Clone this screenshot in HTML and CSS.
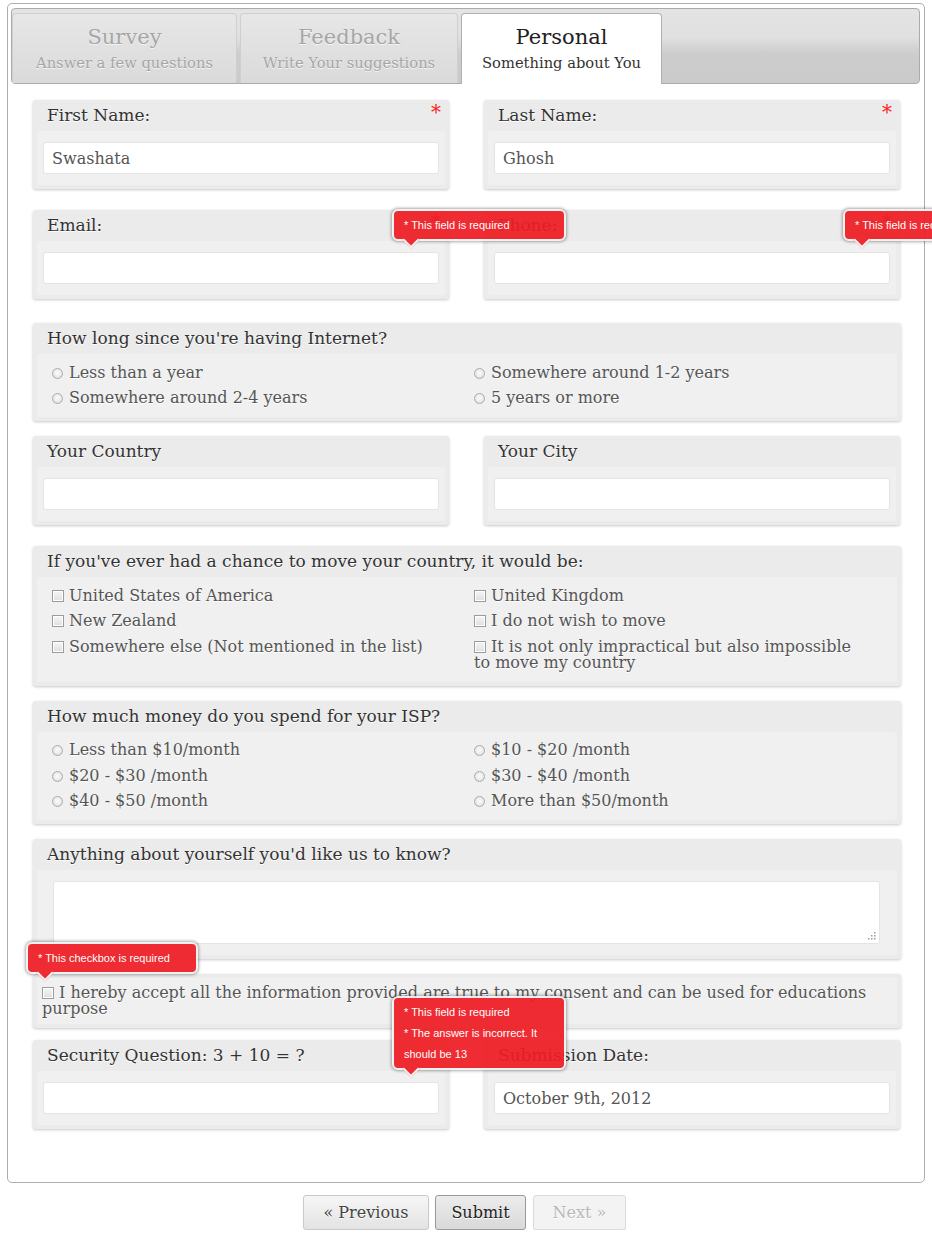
FILE: index.html
```html
<!DOCTYPE html>
<html>
<head>
<meta charset="utf-8">
<title>Personal</title>
<link rel="stylesheet" href="styles.css">
</head>
<body>
<div class="wrap">
  <div class="tabbar">
    <div class="tab tab-survey">
      <div class="tab-title">Survey</div>
      <div class="tab-sub">Answer a few questions</div>
    </div>
    <div class="tab tab-feedback">
      <div class="tab-title">Feedback</div>
      <div class="tab-sub">Write Your suggestions</div>
    </div>
    <div class="tab tab-personal active">
      <div class="tab-title">Personal</div>
      <div class="tab-sub">Something about You</div>
    </div>
  </div>

  <div class="form">
    <div class="row-fields">
      <div class="card">
        <span class="req">*</span>
        <div class="card-label">First Name:</div>
        <div class="card-body"><div class="input">Swashata</div></div>
      </div>
      <div class="card">
        <span class="req">*</span>
        <div class="card-label">Last Name:</div>
        <div class="card-body"><div class="input">Ghosh</div></div>
      </div>
    </div>

    <div class="row-fields row-contact">
      <div class="card">
        <span class="req">*</span>
        <div class="card-label">Email:</div>
        <div class="card-body"><div class="input"></div></div>
        <div class="tip tip-field">* This field is required</div>
      </div>
      <div class="card">
        <span class="req">*</span>
        <div class="card-label">Phone:</div>
        <div class="card-body"><div class="input"></div></div>
        <div class="tip tip-field">* This field is required</div>
      </div>
    </div>

    <div class="card">
      <div class="card-label">How long since you're having Internet?</div>
      <div class="card-body options">
        <div class="opt"><span class="radio"></span>Less than a year</div>
        <div class="opt"><span class="radio"></span>Somewhere around 1-2 years</div>
        <div class="opt"><span class="radio"></span>Somewhere around 2-4 years</div>
        <div class="opt"><span class="radio"></span>5 years or more</div>
      </div>
    </div>

    <div class="row-fields">
      <div class="card">
        <div class="card-label">Your Country</div>
        <div class="card-body"><div class="input"></div></div>
      </div>
      <div class="card">
        <div class="card-label">Your City</div>
        <div class="card-body"><div class="input"></div></div>
      </div>
    </div>

    <div class="card">
      <div class="card-label">If you've ever had a chance to move your country, it would be:</div>
      <div class="card-body options">
        <div class="opt"><span class="check"></span>United States of America</div>
        <div class="opt"><span class="check"></span>United Kingdom</div>
        <div class="opt"><span class="check"></span>New Zealand</div>
        <div class="opt"><span class="check"></span>I do not wish to move</div>
        <div class="opt"><span class="check"></span>Somewhere else (Not mentioned in the list)</div>
        <div class="opt"><span class="check"></span>It is not only impractical but also impossible to move my country</div>
      </div>
    </div>

    <div class="card">
      <div class="card-label">How much money do you spend for your ISP?</div>
      <div class="card-body options">
        <div class="opt"><span class="radio"></span>Less than $10/month</div>
        <div class="opt"><span class="radio"></span>$10 - $20 /month</div>
        <div class="opt"><span class="radio"></span>$20 - $30 /month</div>
        <div class="opt"><span class="radio"></span>$30 - $40 /month</div>
        <div class="opt"><span class="radio"></span>$40 - $50 /month</div>
        <div class="opt"><span class="radio"></span>More than $50/month</div>
      </div>
    </div>

    <div class="card">
      <div class="card-label">Anything about yourself you'd like us to know?</div>
      <div class="card-body area-body">
        <div class="textarea">
          <svg class="grip" width="8" height="8" viewBox="0 0 8 8"><g fill="#9a9a9a"><rect x="6" y="0" width="1.5" height="1.5"/><rect x="3" y="3" width="1.5" height="1.5"/><rect x="6" y="3" width="1.5" height="1.5"/><rect x="0" y="6" width="1.5" height="1.5"/><rect x="3" y="6" width="1.5" height="1.5"/><rect x="6" y="6" width="1.5" height="1.5"/></g></svg>
        </div>
      </div>
    </div>

    <div class="card consent">
      <div class="card-body consent-body"><span class="check"></span>I hereby accept all the information provided are true to my consent and can be used for educations purpose</div>
      <div class="tip tip-check">* This checkbox is required</div>
    </div>

    <div class="row-fields">
      <div class="card">
        <div class="card-label">Security Question: 3 + 10 = ?</div>
        <div class="card-body"><div class="input"></div></div>
        <div class="tip tip-sec">* This field is required<br>* The answer is incorrect. It should be 13</div>
      </div>
      <div class="card">
        <div class="card-label">Submission Date:</div>
        <div class="card-body"><div class="input">October 9th, 2012</div></div>
      </div>
    </div>
  </div>
</div>

<div class="actions">
  <button class="btn btn-prev">&laquo; Previous</button>
  <button class="btn btn-submit">Submit</button>
  <button class="btn btn-next" disabled>Next &raquo;</button>
</div>
</body>
</html>
```
FILE: styles.css
```css
* { box-sizing: border-box; }
html, body { margin: 0; padding: 0; background: #fff; overflow-x: hidden; }
body { font-family: "DejaVu Serif", serif; color: #333; }

.wrap {
  width: 918px;
  margin: 3px 0 0 7px;
  border: 1px solid #adadad;
  border-radius: 5px;
  padding: 4px 4px 0 3px;
}

/* tabs */
.tabbar {
  height: 76px;
  border: 1px solid #ababab;
  border-radius: 4px;
  padding: 4px 0 0 0;
  display: flex;
  gap: 3px;
  background: linear-gradient(#e4e4e4 0%, #e0e0e0 38%, #cdcdcd 60%, #cacaca 100%);
}
.tab {
  height: 70px;
  border: 1px solid #cfcfcf;
  border-bottom: 0;
  border-radius: 4px 4px 0 0;
  text-align: center;
  padding-top: 9px;
  background: linear-gradient(#e7e7e7, #dadada);
  color: #a6a6a6;
  text-shadow: 0 1px 0 #f4f4f4;
}
.tab-survey { width: 225px; }
.tab-feedback { width: 218px; }
.tab-personal { width: 201px; }
.tab-title { font-size: 21px; line-height: 28px; }
.tab-sub { font-size: 14.7px; line-height: 20px; margin-top: 2px; }
.tab.active {
  height: 71px;
  background: #fff;
  border-color: #b0b0b0;
  color: #222;
  text-shadow: none;
}
.tab.active .tab-sub { color: #333; }

/* form */
.form {
  padding: 16px 19px 47px 22px;
  display: flex;
  flex-direction: column;
  gap: 15px;
}
.row-fields {
  display: grid;
  grid-template-columns: 416px 416px;
  column-gap: 35px;
  margin-bottom: 6px;
}
.row-contact { margin-bottom: 9px; }
.card {
  position: relative;
  background: #ebebeb;
  border-radius: 3px;
  padding: 4px;
  box-shadow: 0 1px 3px rgba(0, 0, 0, 0.22);
}
.req {
  position: absolute;
  top: 2px;
  right: 8px;
  color: #f22;
  font-size: 20px;
  line-height: 20px;
}
.card-label {
  font-size: 17px;
  line-height: 21px;
  padding: 1px 10px 5px;
  color: #333;
  text-shadow: 0 1px 0 #fff;
}
.card-body {
  background: #f0f0f0;
  padding: 11px 6px;
  border-radius: 2px;
}
.input {
  height: 32px;
  background: #fff;
  border: 1px solid #e4e4e4;
  border-radius: 3px;
  padding: 0 8px;
  font-size: 16px;
  line-height: 31px;
  color: #555;
}

.options {
  display: grid;
  grid-template-columns: 422px 395px;
  padding: 6px 12px 6px 15px;
}
.opt {
  padding: 4.75px 0;
  font-size: 16px;
  line-height: 16px;
  color: #555;
  text-shadow: 0 1px 0 #fff;
}
.radio {
  display: inline-block;
  width: 11px;
  height: 11px;
  margin-right: 6px;
  vertical-align: -1px;
  border: 1px solid #ababab;
  border-radius: 50%;
  background: radial-gradient(circle at 50% 45%, #fbfbfb 0, #f0f0f0 40%, #d6d6d6 100%);
}
.check {
  display: inline-block;
  width: 12px;
  height: 12px;
  margin-right: 5px;
  vertical-align: -1px;
  border: 1px solid #9c9c9c;
  background: linear-gradient(#f6f6f6, #dedede);
  box-shadow: inset 0 0 0 1px #fff;
}

.area-body { padding: 11px 17px 11px 16px; }
.textarea {
  position: relative;
  height: 63px;
  background: #fff;
  border: 1px solid #e4e4e4;
  border-radius: 3px;
}
.grip { position: absolute; right: 3px; bottom: 3px; }

.consent { margin-bottom: -3px; }
.consent-body {
  padding: 7px 10px 7px 5px;
  font-size: 16px;
  line-height: 16px;
  color: #555;
  text-shadow: 0 1px 0 #fff;
}

/* error tooltips */
.tip {
  position: absolute;
  z-index: 5;
  width: 174px;
  padding: 4px 10px 3px;
  border: 2px solid #f3f3f3;
  border-radius: 6px;
  background: #ee1d24;
  color: #fff;
  font: 11px/21px "Liberation Sans", Arial, sans-serif;
  box-shadow: 0 0 3px 1px rgba(0, 0, 0, 0.35);
  opacity: 0.93;
}
.tip::after {
  content: "";
  position: absolute;
  left: 11px;
  bottom: -7px;
  width: 10px;
  height: 10px;
  background: #ee1d24;
  border-right: 2px solid #f3f3f3;
  border-bottom: 2px solid #f3f3f3;
  transform: rotate(45deg);
}
.tip-field { left: 359px; top: -1px; }
.tip-check { left: -7px; top: -32px; width: 172px; }
.tip-sec { left: 359px; top: -44px; }

/* buttons */
.actions {
  display: flex;
  justify-content: center;
  gap: 6px;
  margin: 12px 0 0 -3px;
}
.btn {
  height: 35px;
  padding: 0;
  border: 1px solid #c9c9c9;
  border-radius: 3px;
  font-family: "DejaVu Serif", serif;
  font-size: 16px;
  line-height: 33px;
  color: #444;
  text-shadow: 0 1px 0 #fff;
  background: linear-gradient(#f6f6f6, #e3e3e3);
  box-shadow: 0 1px 1px rgba(0, 0, 0, 0.08);
}
.btn-prev { width: 126px; }
.btn-submit {
  width: 91px;
  margin-right: 1px;
  border-color: #9a9a9a;
  color: #222;
  background: linear-gradient(#ececec, #d9d9d9);
}
.btn-next {
  width: 93px;
  border-color: #dcdcdc;
  color: #b9b9b9;
  background: #f3f3f3;
}
```
